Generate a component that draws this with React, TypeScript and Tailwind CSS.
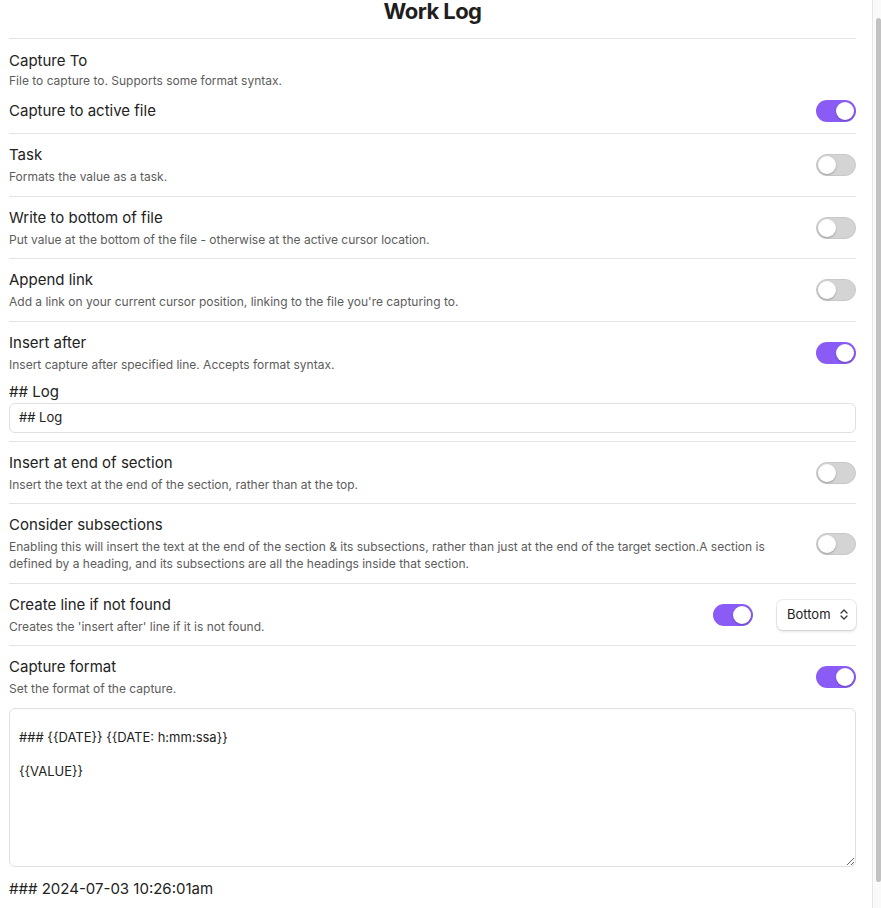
import React from "react";

const font = { fontFamily: "Inter, 'Noto Sans', sans-serif" };

function Toggle({ on }: { on: boolean }) {
  return (
    <div
      className={
        "relative shrink-0 w-10 h-[22px] rounded-full " +
        (on ? "bg-[#8a5cf5]" : "bg-[#d4d4d4] border border-[#c8c8c8]")
      }
    >
      <div
        className={
          "absolute top-1/2 -translate-y-1/2 w-[18px] h-[18px] rounded-full bg-white shadow-[0_1px_2px_rgba(0,0,0,0.25)] " +
          (on ? "right-[2px]" : "left-[1px]")
        }
      />
    </div>
  );
}

function Row({
  name,
  desc,
  on,
  children,
}: {
  name: string;
  desc: string;
  on?: boolean;
  children?: React.ReactNode;
}) {
  return (
    <div className="flex items-center border-t border-[#e3e3e3] pt-[11px] pb-[10.5px]">
      <div className="flex-1 pr-6">
        <div className="text-[15px] leading-5 text-[#222]">{name}</div>
        <div className="mt-[3px] text-[12px] leading-[17px] text-[#5c5c5c]">{desc}</div>
      </div>
      {children}
      {on !== undefined && <Toggle on={on} />}
    </div>
  );
}

export default function App() {
  return (
    <div className="flex h-[908px] overflow-hidden bg-white" style={font}>
      <main className="flex-1 pl-[9px] pr-4">
        {/* Title */}
        <h1 className="-mt-[7px] pb-[9px] text-center text-[22px] leading-9 font-bold tracking-tight text-[#1e1e1e]">
          Work Log
        </h1>

        {/* Capture To */}
        <div className="border-t border-[#e3e3e3] pt-3 pb-[11px]">
          <div className="text-[15px] leading-5 text-[#222]">Capture To</div>
          <div className="mt-[1px] text-[12px] leading-[18px] text-[#5c5c5c]">
            File to capture to. Supports some format syntax.
          </div>
          <div className="mt-[10px] flex items-center">
            <div className="flex-1 text-[15px] leading-5 text-[#222]">Capture to active file</div>
            <Toggle on />
          </div>
        </div>

        <Row name="Task" desc="Formats the value as a task." on={false} />
        <Row
          name="Write to bottom of file"
          desc="Put value at the bottom of the file - otherwise at the active cursor location."
          on={false}
        />
        <Row
          name="Append link"
          desc="Add a link on your current cursor position, linking to the file you're capturing to."
          on={false}
        />

        {/* Insert after */}
        <div className="border-t border-[#e3e3e3] pt-[11px] pb-2">
          <div className="flex items-center">
            <div className="flex-1">
              <div className="text-[15px] leading-5 text-[#222]">Insert after</div>
              <div className="mt-[3px] text-[12px] leading-[17px] text-[#5c5c5c]">
                Insert capture after specified line. Accepts format syntax.
              </div>
            </div>
            <Toggle on />
          </div>
          <div className="mt-[9px] text-[15px] leading-5 text-[#222]">## Log</div>
          <div className="mt-[1px] h-[30px] flex items-center rounded-md border border-[#e0e0e0] bg-white px-[9px] text-[13px] text-[#222]">
            ## Log
          </div>
        </div>

        <Row
          name="Insert at end of section"
          desc="Insert the text at the end of the section, rather than at the top."
          on={false}
        />
        <Row
          name="Consider subsections"
          desc="Enabling this will insert the text at the end of the section & its subsections, rather than just at the end of the target section.A section is defined by a heading, and its subsections are all the headings inside that section."
          on={false}
        />
        <Row name="Create line if not found" desc="Creates the 'insert after' line if it is not found.">
          <Toggle on />
          <div className="ml-6 h-[30px] w-[79px] shrink-0 flex items-center justify-between rounded-md bg-white pl-[10px] pr-2 text-[13px] text-[#222] shadow-[0_0_0_1px_rgba(0,0,0,0.08),0_2px_3px_rgba(0,0,0,0.1)]">
            <span>Bottom</span>
            <svg width="8" height="11" viewBox="0 0 8 11" fill="none" stroke="#333" strokeWidth="1.2" strokeLinecap="round" strokeLinejoin="round">
              <path d="M1 4L4 1L7 4" />
              <path d="M1 7L4 10L7 7" />
            </svg>
          </div>
        </Row>

        {/* Capture format */}
        <div className="border-t border-[#e3e3e3] pt-[11px]">
          <div className="flex items-center">
            <div className="flex-1">
              <div className="text-[15px] leading-5 text-[#222]">Capture format</div>
              <div className="mt-[3px] text-[12px] leading-[17px] text-[#5c5c5c]">
                Set the format of the capture.
              </div>
            </div>
            <Toggle on />
          </div>
          <textarea
            readOnly
            className="mt-[11px] block w-full h-[159px] resize-y rounded-md border border-[#e0e0e0] bg-white px-[9px] py-[3px] text-[13px] leading-[17px] text-[#222] outline-none"
            style={font}
            defaultValue={"\n### {{DATE}} {{DATE: h:mm:ssa}}\n\n{{VALUE}}"}
          />
          <div className="mt-[12px] text-[15px] leading-5 text-[#222]">### 2024-07-03 10:26:01am</div>
        </div>
      </main>

      {/* Scrollbar */}
      <div className="w-[9px] shrink-0 border-l border-[#e6e6e6] bg-[#fafafa] pt-[18px] pl-[3px]">
        <div className="h-[864px] w-[5px] rounded-full bg-[#c2c2c2]" />
      </div>
    </div>
  );
}
